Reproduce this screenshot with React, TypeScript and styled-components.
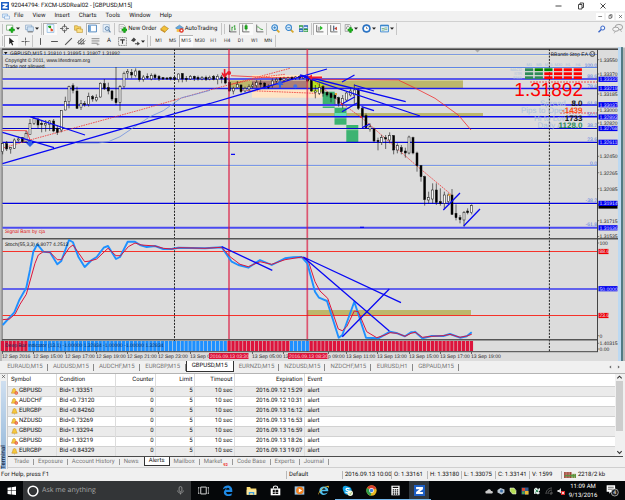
import React from "react";
import styled, { createGlobalStyle } from "styled-components";

const GlobalStyle = createGlobalStyle`
  * { box-sizing: border-box; }
  body { margin: 0; background: #f0f0f0; text-rendering: geometricPrecision; }
  button, input { font: inherit; color: inherit; text-rendering: inherit; }
`;

const UI = `Roboto, "Open Sans", sans-serif`;

const Desktop = styled.div`
  display: flex;
  flex-direction: column;
  min-height: 100vh;
  font-family: ${UI};
  font-size: 6px;
  line-height: 8px;
  color: #111;
  overflow: hidden;
`;

const PlainButton = styled.button`
  display: flex;
  align-items: center;
  justify-content: center;
  gap: 1px;
  padding: 0;
  margin: 0;
  border: 0;
  background: none;
  white-space: nowrap;
`;

/* ---------- title, menu ---------- */
const TitleBar = styled.header`
  display: flex;
  align-items: center;
  height: 11px;
  padding: 0 18px 0 1px;
  gap: 2px;
  background: #fff;
`;
const Title = styled.h1`
  flex: 1;
  margin: 0;
  font-size: 6px;
  font-weight: 400;
`;
const WindowButtons = styled.div<{ $gap: number }>`
  display: flex;
  gap: ${(p) => p.$gap}px;
`;
const MenuBar = styled.nav`
  display: flex;
  align-items: center;
  height: 11px;
  padding: 0 1px 0 2px;
  background: #f1f1f1;
  border-bottom: 1px solid #d0d0d0;
`;
const MenuItems = styled.div`
  flex: 1;
  display: flex;
  gap: 9px;
  padding-left: 4px;
`;
const ChildButton = styled(PlainButton)`
  width: 8px;
  height: 7px;
  background: #fff;
`;

/* ---------- toolbars ---------- */
const Toolbar = styled.div<{ $h: number }>`
  display: flex;
  align-items: center;
  height: ${(p) => p.$h}px;
  background: #f1f1f1;
`;
const Group = styled.div<{ $w: number }>`
  display: flex;
  align-items: stretch;
  width: ${(p) => p.$w}px;
  height: 12px;
  padding-left: 1px;
  border-right: 1px solid #c6c6c6;
`;
const Tool = styled(PlainButton)<{ $grow?: number; $on?: boolean }>`
  flex: ${(p) => p.$grow ?? 14} 1 0;
  min-width: 0;
  font-size: 6px;
  background: ${(p) => (p.$on ? "#fafafa" : "none")};
  box-shadow: ${(p) => (p.$on ? "inset 1px 1px 0 #b4b4b4" : "none")};
`;
const Period = styled(Tool)`
  font-size: 5px;
  color: #333;
`;
const Grip = styled.i`
  width: 2px;
  margin: 1px 0 1px 1px;
  border-left: 1px solid #c4c4c4;
`;
const ToolbarEnd = styled.div`
  display: flex;
  gap: 6px;
  margin-left: auto;
  padding-right: 2px;
`;

/* ---------- chart ---------- */
const ChartWindow = styled.main`
  background: #dcdcdc;
`;
const ChartSvg = styled.svg`
  display: block;
  width: 100%;
  height: auto;
`;
const TabStrip = styled.nav`
  display: flex;
  align-items: stretch;
  height: 13px;
  padding: 0 3px 1px 2px;
  background: #f0f0f0;
  border-bottom: 1px solid #b4b4b4;
`;
const TabSet = styled.div`
  display: flex;
  width: 457px;
`;
const ChartTab = styled(PlainButton)<{ $grow: number; $on?: boolean }>`
  flex: ${(p) => p.$grow} 1 0;
  font-size: 6px;
  color: ${(p) => (p.$on ? "#111" : "#777")};
  background: ${(p) => (p.$on ? "#fff" : "none")};
  border: solid #333;
  border-width: ${(p) => (p.$on ? "0 1px 1px 1px" : "0")};
  position: relative;
  &::after {
    content: "";
    position: absolute;
    right: 0;
    top: 3px;
    height: 7px;
    border-right: ${(p) => (p.$on ? "0" : "1px solid #888")};
  }
`;
const Scrollers = styled.div`
  display: flex;
  gap: 3px;
  margin-left: auto;
  color: #777;
`;

/* ---------- terminal ---------- */
const Terminal = styled.section`
  display: flex;
  height: 95px;
  background: #f0f0f0;
`;
const TerminalRail = styled.aside`
  width: 8px;
  display: flex;
  flex-direction: column;
  border-right: 1px solid #ccc;
`;
const RailTitle = styled.h2`
  flex: 1;
  margin: 2px 1px 0;
  writing-mode: vertical-rl;
  transform: rotate(180deg);
  font-size: 6px;
  line-height: 6px;
  font-weight: 600;
  color: #1c2f4c;
  background: linear-gradient(to top, #cfdff0, #8fb4d8);
`;
const TerminalBody = styled.div`
  flex: 1;
  display: flex;
  flex-direction: column;
  min-width: 0;
`;
const TableArea = styled.div`
  display: flex;
  height: 83px;
  margin-right: 2px;
  border-bottom: 1px solid #4a4a4a;
  background: #fff;
`;
const Table = styled.table`
  flex: 1;
  height: 82px;
  border-collapse: collapse;
  table-layout: fixed;
  font-size: 6px;
  line-height: 8px;
`;
const Cell = styled.td<{ $right?: boolean }>`
  padding: 0 1px 0 3px;
  text-align: ${(p) => (p.$right ? "right" : "left")};
  border-right: 1px solid #dcdcdc;
  white-space: nowrap;
  &:last-child { border-right: 0; }
`;
const HeadCell = styled(Cell).attrs({ as: "th", scope: "col" })`
  height: 12px;
  font-weight: 400;
`;
const Row = styled.tr<{ $shade: boolean }>`
  background: ${(p) => (p.$shade ? "#ebebeb" : "#fff")};
  border-top: 1px solid #d2d2d2;
`;
const SymbolName = styled.span`
  display: flex;
  align-items: center;
  gap: 1px;
`;
const ScrollBar = styled.div`
  width: 8px;
  display: flex;
  flex-direction: column;
  align-items: center;
  justify-content: space-between;
  background: #f0f0f0;
`;
const Thumb = styled.div`
  width: 7px;
  height: 50px;
  margin-bottom: auto;
  background: #cdcdcd;
`;
const TerminalTabs = styled.nav`
  display: flex;
  height: 11px;
  padding-left: 2px;
  border-bottom: 1px solid #cfcfcf;
`;
const TerminalTab = styled(PlainButton)<{ $on?: boolean; $bare?: boolean }>`
  height: ${(p) => (p.$on ? 9 : 10)}px;
  padding: ${(p) => (p.$on ? "0 4px" : "0 5px 0 4px")};
  font-size: 6px;
  color: ${(p) => (p.$on ? "#111" : "#777")};
  background: ${(p) => (p.$on ? "#fff" : `linear-gradient(#999, #999) right 0 top 2px / ${p.$bare ? 0 : 1}px 6px no-repeat`)};
  border: ${(p) => (p.$on ? "1px solid #333" : "0")};
  border-top: 0;
`;
const Unread = styled.sub`
  font-size: 4px;
  line-height: 4px;
  color: #e22;
  font-weight: 700;
  align-self: flex-end;
`;

/* ---------- status ---------- */
const StatusBar = styled.footer`
  display: grid;
  grid-template-columns: 1fr 56px 49px 36px 34px 34px 34px 32px 64px;
  align-items: center;
  height: 12px;
  background: #f0f0f0;
`;
const Status = styled.span`
  display: flex;
  align-items: center;
  gap: 2px;
  padding-left: 2px;
  white-space: nowrap;
  border-left: 1px solid #b8b8b8;
  &:first-child { border-left: 0; padding-left: 1px; }
`;

/* ---------- taskbar ---------- */
const Taskbar = styled.div`
  display: flex;
  align-items: stretch;
  flex: 1 0 19px;
  background: #050709;
  color: #fff;
`;
const StartButton = styled(PlainButton)`
  width: 23px;
`;
const SearchBox = styled.label`
  display: flex;
  align-items: center;
  gap: 3px;
  width: 168px;
  padding: 0 6px 0 4px;
  background: #333537;
`;
const SearchInput = styled.input`
  flex: 1;
  min-width: 0;
  padding: 0;
  border: 0;
  outline: 0;
  background: none;
  font-family: "Open Sans", sans-serif;
  font-size: 7px;
  &::placeholder { color: #a6a6a6; opacity: 1; }
`;
const TaskButton = styled(PlainButton)<{ $open?: boolean; $active?: boolean }>`
  width: 24px;
  padding: 0 2px;
  background: ${(p) => (p.$active ? "#30373d" : "none")};
  border-bottom: 1px solid ${(p) => (p.$open ? "#76b9ed" : "transparent")};
  background-clip: content-box;
`;
const Tray = styled.div`
  display: flex;
  align-items: center;
  margin-left: auto;
`;
const TrayButton = styled(PlainButton)`
  width: 12px;
`;
const Clock = styled.time`
  width: 32px;
  text-align: center;
  font-size: 6px;
  line-height: 9px;
  white-space: pre-line;
`;
const NoticeButton = styled(PlainButton)`
  width: 26px;
`;

/* ---------- icons ---------- */
type IconProps = { w?: number; h?: number; box?: string; children: React.ReactNode };
const Icon = ({ w = 9, h = 9, box = "0 0 16 16", children }: IconProps) => (
  <svg width={w} height={h} viewBox={box} fill="none" aria-hidden="true">
    {children}
  </svg>
);
const Caret = () => (
  <svg width="4" height="3" viewBox="0 0 4 3" aria-hidden="true"><path d="M0 .5h4L2 2.8z" fill="#222" /></svg>
);
const plus = "M10 6h3v3h3v3h-3v3h-3v-3H7V9h3z";

const icons = {
  logo: <><rect width="16" height="16" fill="#1d5fc4" /><path d="M3 3h10v3l-5 4h5v3H3v-3l5-4H3z" fill="#fff" /></>,
  child: <><path d="M1 4h10v7H1z" fill="#dcebfa" stroke="#6b9bd0" /><path d="M5 8h10v6H5z" fill="#eef6ff" stroke="#6b9bd0" /></>,
  addChart: <><path d="M1 2h11v9H1z" fill="#fff" stroke="#4a8a4a" /><path d={plus} fill="#18b818" stroke="#0b8a0b" transform="translate(-1 0)" /></>,
  profile: <><path d="M1 2h11v8H1z" fill="#e8f1fa" stroke="#6f93b8" /><path d="M4 5h11v8H4z" fill="#cfe2f4" stroke="#6f93b8" /><path d="M5 14h9" stroke="#777" strokeWidth="2" /></>,
  market: <><path d="M2 1h12v14H2z" fill="#f4faff" stroke="#67a0d4" /><path d="M4 4l3 3M5 4h3v3" stroke="#17a017" strokeWidth="2" /><path d="M12 12L8 8M11 9v3H8" stroke="#e04a20" strokeWidth="2" /></>,
  target: <><circle cx="8" cy="8" r="4.5" stroke="#555" strokeWidth="1.5" /><path d="M8 0v6M8 10v6M0 8h6M10 8h6" stroke="#555" strokeWidth="1.5" /></>,
  folderStar: <><path d="M1 3h5l1 2h5v6H1z" fill="#f6d264" stroke="#b98c1e" /><path d="M5 8h4l1 1h5v6H5z" fill="#fbe08a" stroke="#b98c1e" /></>,
  terminal: <><path d="M1 2h14v12H1z" fill="#fff" stroke="#3a78b8" strokeWidth="1.5" /><path d="M2 3h3v10H2z" fill="#5a9ad6" /></>,
  tester: <><path d="M2 1h11v13H2z" fill="#e9f2fb" stroke="#8fa9c4" /><circle cx="9" cy="8" r="3.5" fill="#cfe3f5" stroke="#5a7fa6" strokeWidth="1.5" /><path d="M12 11l3 4" stroke="#5a7fa6" strokeWidth="2" /></>,
  order: <><path d="M2 1h8l3 3v10H2z" fill="#f7f7f7" stroke="#888" /><path d="M4 5h6M4 8h4" stroke="#999" /><path d={plus} fill="#18b818" stroke="#0b8a0b" /></>,
  book: <><path d="M1 9l6-6 8 5-6 6z" fill="#f2c03a" stroke="#a8740e" /><path d="M1 9l8 5v2L1 11z" fill="#c98a18" /></>,
  auto: <><path d="M1 7l7-5 7 5-7 4z" fill="#67a9dc" stroke="#3e78aa" /><path d="M3 9h9v5H3z" fill="#f3c14a" /><circle cx="11.500" cy="11.500" r="4" fill="#e02a1c" /><path d="M10 10h3v3h-3z" fill="#fff" /></>,
  bars: <><path d="M3 1v13h12M2 13h2" stroke="#555" strokeWidth="1.5" /><path d="M7 5v7M12 2v9M7 6h2M10 4h2M12 9h2" stroke="#2a9a2a" strokeWidth="1.5" /></>,
  candle: <><path d="M3 1v13h12" stroke="#555" strokeWidth="1.5" /><path d="M9 0v12" stroke="#0a7a0a" /><path d="M7 3h4v6H7z" fill="#20b820" stroke="#0a7a0a" /></>,
  line: <><path d="M3 1v13h12" stroke="#555" strokeWidth="1.5" /><path d="M4 5c4 0 4 5 10 5" stroke="#2a9a2a" strokeWidth="1.5" /></>,
  zoomIn: <><path d="M9 9l6 6" stroke="#d8a728" strokeWidth="3" /><circle cx="6.500" cy="6.500" r="5" fill="#d8ecfb" stroke="#2f7fc9" strokeWidth="1.8" /><path d="M4 6.500h5M6.500 4v5" stroke="#2f7fc9" strokeWidth="1.5" /></>,
  zoomOut: <><path d="M9 9l6 6" stroke="#d8a728" strokeWidth="3" /><circle cx="6.500" cy="6.500" r="5" fill="#d8ecfb" stroke="#2f7fc9" strokeWidth="1.8" /><path d="M4 6.500h5" stroke="#2f7fc9" strokeWidth="1.500" /></>,
  tile: <><path d="M0 2h7v6H0zM8 8h8v6H8z" fill="#2e9c3e" /><path d="M8 2h8v6H8zM0 8h7v6H0z" fill="#2c66bb" /><path d="M1 5h5v2H1zM9 5h6v2H9zM1 11h5v2H1zM9 11h6v2H9z" fill="#e6f2ff" /></>,
  scroll: <><path d="M3 2v12h12M7 5v7" stroke="#555" strokeWidth="1.5" /><path d="M9 3l5 4-5 4z" fill="#20b820" /></>,
  shift: <><path d="M3 2v12h12M8 3v9" stroke="#555" strokeWidth="1.5" /><path d="M14 5L9 8l5 3z" fill="#c0392b" /><path d="M9 3v9" stroke="#2f6fb5" /></>,
  indicator: <><path d="M2 1h8l2 2v10H2z" fill="#eee" stroke="#777" /><path d="M4 9c1-6 3-6 5-4" stroke="#555" /><path d={plus} fill="#18b818" stroke="#0b8a0b" /></>,
  clock: <><circle cx="8" cy="8" r="7" fill="#2f7fd6" stroke="#1d5a9f" /><circle cx="8" cy="8" r="4.500" fill="#fff" /><path d="M8 5v3h2" stroke="#333" /></>,
  template: <><path d="M1 2h14v12H1z" fill="#e8f4ff" stroke="#2f7fc9" strokeWidth="1.5" /><path d="M1 3h14" stroke="#2f7fc9" strokeWidth="2" /><path d="M3 8h4l2-1h4M3 11h3l3-1h4" stroke="#3a8a3a" /></>,
  find: <><circle cx="9.500" cy="6" r="4" fill="#eef5ff" stroke="#3a66c8" strokeWidth="2" /><path d="M6.500 9L1 14.500" stroke="#3a66c8" strokeWidth="3" /></>,
  chat: <><ellipse cx="10" cy="6" rx="5.500" ry="4" fill="#eee" stroke="#999" strokeWidth="1.3" /><ellipse cx="5.500" cy="9" rx="4.500" ry="3" fill="#f6f6f6" stroke="#999" strokeWidth="1.3" /><path d="M5 12l-2 3M12 10l2 3" stroke="#999" /></>,
  cursor: <path d="M4 1v12l3-3 2 5 2-1-2-5h4z" fill="#222" />,
  cross: <path d="M8 1v14M1 8h14" stroke="#555" strokeWidth="1.5" strokeDasharray="5 1" />,
  vline: <path d="M8 2v12" stroke="#555" strokeWidth="1.8" />,
  hline: <path d="M2 8h12" stroke="#555" strokeWidth="1.8" />,
  trend: <path d="M2 14L14 2" stroke="#555" strokeWidth="1.8" />,
  channel: <path d="M0 11L9 2M3 13L13 3M7 14l8-8M3 6v6M7 3v9M11 4v9M2 12h12" stroke="#555" strokeWidth="1.3" />,
  fibo: <><path d="M1 3h14M1 7h14M1 11h10" stroke="#777" strokeWidth="1.5" /><path d="M12 10v5M10 13h5" stroke="#777" /></>,
  label: <><path d="M1 1h14v14H1z" stroke="#777" strokeDasharray="2 1" strokeWidth="1.5" /><path d="M4 5h8M8 5v7" stroke="#333" strokeWidth="2" /></>,
  arrows: <path d="M0 6l5-5 4 4-4 4zM7 11h4V8l5 4-5 3v-2H7z" fill="#444" />,
  bell: <><path d="M8 1c3 0 4 3 4 6l2 4v1H2v-1l2-4c0-3 1-6 4-6z" fill="#f6c83c" stroke="#b9851a" /><path d="M6 13h4l-2 2z" fill="#b9851a" /></>,
  bellOff: <><path d="M7 1c3 0 4 3 4 6l2 4v1H1v-1l2-4c0-3 1-6 4-6z" fill="#f6c83c" stroke="#b9851a" /><circle cx="12" cy="11.500" r="4" fill="#e4502e" /><path d="M10 11.500h4" stroke="#fff" strokeWidth="1.5" /></>,
  min: <path d="M1 8h12" stroke="#333" strokeWidth="1.8" />,
  restore: <><path d="M3 5h7v9H3z" stroke="#333" strokeWidth="1.8" /><path d="M6 5V2h7v9h-3" stroke="#333" strokeWidth="1.8" /></>,
  close: <path d="M3 3l10 10M13 3L3 13" stroke="#333" strokeWidth="1.8" />,
  left: <path d="M11 4L6 8l5 4z" fill="#666" />,
  right: <path d="M5 4l5 4-5 4z" fill="#666" />,
  up: <path d="M3 10l5-5 5 5" stroke="#333" strokeWidth="2.500" />,
  down: <path d="M3 5l5 5 5-5" stroke="#333" strokeWidth="2.500" />,
  win: <path d="M1 3l6-1v6H1zM8 2l8-1v7H8zM1 9h6v6l-6-1zM8 9h8v7l-8-1z" fill="#fff" />,
  cortana: <circle cx="8" cy="8" r="6.500" stroke="#fff" strokeWidth="2" />,
  mic: <><rect x="5.500" y="1" width="5" height="9" rx="2.500" stroke="#aaa" strokeWidth="1.3" /><path d="M3 8c0 6 10 6 10 0M8 12v3" stroke="#aaa" strokeWidth="1.3" /></>,
  taskview: <path d="M4 3h8v10H4zM2 4H0v8h2M14 4h2v8h-2" stroke="#ddd" strokeWidth="1.4" />,
  edge: <path d="M1 7c1-8 14-9 14 1v2H6c0 4 5 4 8 2v3C8 18 1 15 3 9c1-2 3-4 5-4-5-1-7 2-7 2zm5 0h5c0-4-5-4-5 0z" fill="#1e8ae6" />,
  folder: <><path d="M1 3h5l1 2h8v9H1z" fill="#fbdc74" /><path d="M1 7h14v7H1z" fill="#fce9a0" /><path d="M4 10h8v4h-2v-2H6v2H4z" fill="#3f9fe0" /></>,
  store: <><path d="M1 5h14v10H1z" fill="#fff" /><path d="M5 5V3c0-2 6-2 6 0v2" stroke="#fff" strokeWidth="1.500" /><path d="M4 7h3v3H4zM8 7h4v3H8zM4 11h3v2H4zM8 11h4v2H8z" fill="#111" /></>,
  media: <><rect x="1" y="2" width="14" height="12" fill="#9cc4e4" /><circle cx="8.500" cy="8" r="5.500" fill="#f08020" /><path d="M7 5l5 3-5 3z" fill="#fff" /></>,
  ie: <><path d="M2 8c0-8 13-8 13 0v1H6c0 4 4 4 8 2-2 5-12 5-12-3zm4-1h5c0-3-5-3-5 0z" fill="#4fc0f0" /><path d="M1 15C-2 11 9 1 15 1c2 1 0 3 0 4 0-4-5-3-9 1s-6 8-5 9z" fill="#f2c230" /></>,
  skype: <><circle cx="5" cy="5" r="4" fill="#12a5e8" /><circle cx="8" cy="8" r="6" fill="#12a5e8" /><path d="M11 6C9 4 5 5 6 7s5 1 5 3-4 2-6 0" stroke="#fff" strokeWidth="1.700" /><circle cx="12" cy="12" r="4" fill="#f4f9e8" /><path d="M10 12l2 2 2-4" stroke="#7aa82c" /></>,
  chrome: <><circle cx="8" cy="8" r="7.500" fill="#e8b824" /><path d="M8 8L1.500 4.200A7.500 7.500 0 0 1 15 5z" fill="#d8402f" /><path d="M8 8L1.500 4.200A7.500 7.500 0 0 0 7 15.500z" fill="#2fa04c" /><circle cx="8" cy="8" r="3.500" fill="#fff" /><circle cx="8" cy="8" r="2.600" fill="#3f7fe0" /></>,
  calc: <><path d="M2 1h12v14H2z" fill="#fff" /><path d="M4 2.500h8v2H4zM4 6h2v2H4zM7 6h2v2H7zM10 6h2v2h-2zM4 9h2v2H4zM7 9h2v2H7zM10 9h2v2h-2zM4 12h2v2H4zM7 12h2v2H7zM10 12h2v2h-2z" fill="#111" /></>,
  cloud: <path d="M1 12c-1-4 2-5 3-4 1-5 8-5 8 0 4-1 5 4 2 5H2z" fill="#c9c9c9" />,
  camera: <><path d="M1 6l6-4 8 3v6l-6 4-8-4z" fill="#b8c4cf" /><circle cx="9" cy="8" r="3" fill="#3c6fa8" /></>,
  leaf: <path d="M2 2h8l4 5v7H7L2 8z" fill="#b5dd55" stroke="#fff" />,
  photo: <><path d="M1 1h14v14H1z" fill="#35598c" /><path d="M2 2h6v6H2z" fill="#db4a32" /><path d="M8 8h7v7H8z" fill="#eab830" /><path d="M2 9h5v5H2z" fill="#4ea650" /></>,
  dropbox: <><path d="M2 4l4-3 4 3 4-2v5l-3 2 3 3-4 3-4-2-4 1V8z" fill="#dfe9e4" /><path d="M5 5l5 5M10 5l-5 6" stroke="#2c8a58" strokeWidth="2" /></>,
  wifi: <path d="M2 14C2 7 7 2 14 2M6 14c0-5 3-8 8-8M10 14c0-2 2-4 4-4v4z" stroke="#777" strokeWidth="1.5" />,
  sound: <><path d="M1 6h3l4-4v11L4 10H1z" fill="#ddd" /><rect x="8" y="8" width="8" height="8" fill="#e02a2a" /><path d="M10 10l4 4M14 10l-4 4" stroke="#fff" strokeWidth="1.500" /></>,
  traffic: <><path d="M0 0h20v16H0z" fill="#9c3c30" /><path d="M20 5h12v11H20z" fill="#6d8f3e" /><path d="M3 0v16M7 0v16M11 0v16M15 0v16M23 4v12M28 6v10" stroke="#f0e6e0" strokeWidth="1" /><path d="M2 10h30" stroke="#4b9a3c" strokeWidth="3" /></>,
};
type IconName = keyof typeof icons;
const Glyph = ({ name, size = 9 }: { name: IconName; size?: number }) => (
  <Icon w={size} h={size}>{icons[name]}</Icon>
);

/* ---------- chart data ---------- */
type Pt = [number, number];
const STEP = 3.908;
const xOf = (i: number) => 2.7 + STEP * i;
/** Joins points measured in thirds of a pixel from an origin. */
const trace = (ox: number, oy: number, pts: Pt[]) =>
  pts.map(([x, y]) => `${(ox + x / 3).toFixed(1)},${(oy + y / 3).toFixed(1)}`).join(" ");

/** high, low, body top, body bottom, bearish */
const candles: [number, number, number, number, number][] = [
  [293, 328, 296, 320, 0], [288, 318, 296, 312, 1], [306, 326, 308, 312, 0], [280, 312, 285, 310, 0],
  [275, 290, 282, 285, 0], [276, 292, 278, 290, 1], [258, 292, 266, 290, 0], [222, 268, 236, 268, 0],
  [215, 240, 220, 235, 0], [220, 250, 222, 240, 1], [225, 262, 235, 239, 1], [225, 260, 236, 240, 0],
  [225, 258, 228, 238, 0], [222, 262, 228, 258, 1], [240, 270, 250, 262, 1], [195, 262, 196, 255, 0],
  [155, 196, 170, 195, 0], [122, 190, 124, 170, 0], [115, 145, 122, 136, 1], [125, 192, 138, 190, 1],
  [165, 195, 175, 188, 0], [168, 185, 176, 179, 1], [143, 185, 155, 178, 0], [150, 170, 155, 162, 1],
  [148, 170, 158, 165, 0], [112, 158, 115, 156, 0], [102, 135, 116, 130, 1], [113, 148, 128, 138, 1],
  [135, 168, 138, 162, 1], [66, 180, 160, 173, 1], [120, 197, 125, 172, 0], [80, 130, 85, 125, 0],
  [72, 100, 80, 84, 0], [72, 100, 82, 90, 1], [70, 97, 78, 92, 0], [76, 110, 78, 104, 1],
  [90, 110, 96, 103, 0], [85, 102, 94, 98, 1], [85, 106, 92, 102, 0], [86, 104, 90, 98, 1],
  [90, 108, 94, 102, 1], [96, 105, 98, 102, 1], [96, 105, 99, 102, 1], [95, 106, 98, 102, 1],
  [96, 105, 98, 103, 1], [85, 112, 87, 104, 0], [84, 112, 86, 102, 1], [93, 110, 100, 104, 1],
  [90, 105, 94, 102, 0], [92, 108, 94, 101, 1], [92, 107, 97, 102, 1], [93, 106, 97, 102, 0],
  [92, 108, 97, 103, 1], [92, 106, 97, 102, 0], [90, 106, 94, 103, 1], [88, 118, 94, 104, 0],
  [90, 115, 96, 101, 1], [85, 118, 96, 114, 1], [105, 140, 112, 138, 1], [125, 148, 130, 138, 0],
  [108, 130, 118, 128, 0], [118, 145, 120, 140, 1], [125, 142, 130, 138, 0], [118, 140, 124, 132, 0],
  [112, 130, 120, 124, 0], [105, 128, 112, 122, 0], [105, 128, 114, 118, 1], [112, 130, 114, 126, 1],
  [118, 132, 124, 128, 1], [100, 128, 108, 122, 0], [98, 115, 103, 108, 0], [96, 110, 100, 105, 1],
  [95, 112, 100, 106, 0], [95, 107, 99, 103, 0], [94, 106, 98, 102, 1], [93, 105, 96, 100, 0],
  [91, 104, 95, 99, 1], [90, 102, 94, 100, 0], [90, 112, 96, 108, 1], [100, 140, 106, 138, 1],
  [120, 160, 138, 142, 0], [115, 150, 128, 145, 0], [120, 155, 125, 145, 1], [140, 155, 142, 150, 1],
  [142, 172, 145, 158, 1], [145, 178, 150, 160, 1], [155, 185, 158, 176, 1], [150, 190, 160, 178, 0],
  [138, 170, 144, 165, 0], [128, 155, 138, 150, 0], [118, 178, 135, 150, 0], [130, 195, 136, 190, 1],
  [185, 245, 190, 214, 1], [205, 250, 212, 248, 1], [235, 260, 245, 252, 0], [248, 292, 252, 288, 1],
  [278, 316, 286, 290, 1], [270, 300, 278, 292, 0], [270, 312, 278, 282, 1], [262, 295, 272, 285, 0],
  [270, 328, 272, 315, 1], [295, 325, 302, 315, 0], [300, 328, 308, 320, 1], [308, 338, 318, 324, 1],
  [272, 328, 276, 324, 0], [275, 328, 278, 324, 1], [320, 380, 324, 362, 1], [360, 410, 362, 395, 1],
  [392, 482, 395, 464, 1], [440, 475, 458, 465, 0], [415, 475, 435, 462, 0], [415, 480, 435, 472, 1],
  [430, 482, 470, 476, 1], [440, 490, 450, 475, 0], [445, 475, 450, 470, 0], [432, 510, 450, 508, 1],
  [478, 526, 505, 518, 1], [510, 535, 518, 524, 1], [498, 545, 502, 525, 0], [490, 508, 498, 503, 1],
  [478, 508, 482, 503, 0],
];

/** y, colour, thickness */
const levels: [number, string, number][] = [
  [54.5, "#7f9be0", 1], [67.5, "#5f86e6", 1], [79, "#2c2cf0", 1.5], [88.5, "#1c1cf0", 1.3],
  [105, "#4040f0", 2], [116.7, "#0808f0", 1.6], [128.5, "#0000cc", 1.1], [142.4, "#0000d8", 1.4],
  [165.4, "#6f90e8", 1], [203.4, "#0000e0", 1.2], [227.8, "#4a4af0", 2],
];
const trends: [number, number, number, number][] = [
  [2.5, 163.7, 210, 103.3], [205, 105, 327, 69], [30, 116.7, 85, 135], [2.5, 132.3, 54, 147.7],
  [300, 75, 405.7, 101.7], [300, 75.7, 420, 116], [354, 85, 374, 91], [342, 82, 354.5, 75],
  [342, 111.7, 357, 103], [342, 104, 355, 96.700], [361.5, 106.7, 374, 110.7], [362, 127.7, 370, 124],
  [443.3, 210, 460, 193], [463.7, 226, 480, 209], [231, 154.4, 235, 154.4], [360, 227.3, 364, 227.3],
];
const axis: [number, string][] = [
  [59.7, "1.33550"], [74, "1.33370"], [94, "1.33185"], [110, "1.33000"], [123, "1.32820"], [156.3, "1.32450"],
  [172.7, "1.32265"], [188.7, "1.32085"], [220.7, "1.31715"], [236.500, "1.31535"], [243, "100"],
  [335.7, "0"], [343.300, "1.40315"], [349, "0.00"],
];
const tags: [number, string, string, number][] = [
  [206, "", "#000", 19], [79.300, "1.33332", "#0000f0", 19], [88.6, "1.33219", "#0000f0", 19],
  [104.700, "1.33037", "#0000f0", 19], [117, "1.32893", "#0000f0", 19], [128.5, "1.32768", "#0000f0", 19],
  [142.3, "1.32611", "#0000f0", 19], [203.4, "1.31914", "#0000f0", 19], [227.8, "1.31636", "#0000f0", 19],
  [251.5, "88.6", "#f00000", 10], [288.700, "50.0000", "#0000f0", 19], [315.500, "23.6", "#f00000", 10],
];
const fibs: [number, string][] = [
  [65, "100.0"], [76, "88.6"], [86, "78.6"], [103, "61.8"], [114.3, "50.0"], [125.5, "38.2"],
  [139.7, "23.6"], [163, "0.0"], [200.500, "-38.2"], [224.300, "-61.8"],
];
const dates: [number, string][] = [
  [2, "12 Sep 2016"], [33, "12 Sep 15:00"], [65, "12 Sep 17:00"], [96, "12 Sep 19:00"], [127, "12 Sep 21:00"],
  [158, "12 Sep 23:00"], [190, "13 Sep 0"], [252, "13 Sep 05:00"], [283, "13"], [328, "p 09:00"],
  [346, "13 Sep 11:00"], [377, "13 Sep 13:00"], [409, "13 Sep 15:00"], [440, "13 Sep 17:00"], [471, "13 Sep 19:00"],
];
const G = "#2e8b57", D = "#008000", R = "#ff0000";
const signals = [[G, D, D, R, R, R], [G, G, R, R, R, R], [G, G, R, R, R, R]];
const signalX = [525, 534.7, 544.3, 554, 563.7, 573.7];

const fast = [
  trace(0, 235, [[8, 270], [43, 232], [58, 195], [79, 158], [90, 105], [100, 50], [112, 28], [130, 50], [150, 52], [172, 88], [184, 78], [207, 15], [219, 22], [235, 65], [254, 96], [275, 75], [290, 66], [311, 38], [324, 33], [348, 72], [360, 66], [383, 20], [405, 20], [420, 30], [440, 36], [465, 33], [490, 42], [515, 42], [535, 38], [615, 40]]),
  trace(205, 235, [[0, 40], [25, 38], [50, 37], [80, 80], [100, 90], [130, 98], [165, 75], [200, 90], [240, 70], [265, 67], [290, 66], [307, 85], [330, 170], [342, 188], [366, 198], [401, 308], [412, 300], [448, 200], [483, 308], [520, 310], [555, 290], [577, 295], [600, 304], [618, 292], [630, 292]]),
  trace(415, 235, [[0, 290], [22, 310], [50, 303], [85, 303], [105, 297], [135, 308], [155, 304], [170, 292]]),
].join(" ");
const slow = [
  trace(0, 235, [[8, 254], [28, 252], [45, 238], [60, 208], [79, 178], [105, 85], [115, 60], [130, 50], [150, 52], [172, 74], [184, 74], [208, 38], [219, 30], [254, 80], [270, 78], [290, 72], [324, 40], [348, 62], [362, 62], [385, 35], [405, 24], [425, 30], [465, 33], [490, 40], [515, 42], [540, 38], [615, 40]]),
  trace(205, 235, [[0, 40], [50, 37], [75, 65], [105, 88], [130, 95], [165, 80], [200, 88], [240, 74], [290, 66], [310, 78], [330, 140], [345, 168], [368, 190], [400, 282], [412, 287], [425, 275], [448, 228], [460, 230], [485, 290], [515, 308], [540, 300], [555, 293], [577, 295], [600, 304], [618, 295], [630, 292]]),
  trace(415, 235, [[0, 291], [22, 307], [50, 304], [85, 302], [105, 298], [135, 307], [155, 303], [170, 298]]),
].join(" ");

const isBull = (i: number) => (i >= 7 && i < 58) || (i >= 74 && i < 79);
const ARIAL = `"Liberation Sans", Arial, sans-serif`;

function Chart() {
  return (
    <ChartSvg viewBox="0 47 625 314" role="img" aria-label="GBPUSD M15 price chart" fontFamily={ARIAL} fontSize="5">
      <rect y="47" width="625" height="314" fill="#b8b8b8" />
      <rect x="2" y="49" width="616" height="312" fill="#dcdcdc" />
      <path d="M0 47.500h625" stroke="#d8d8d8" />
      <path d="M2 49.200h616" stroke="#444" strokeWidth="1.400" />
      <path d="M2.200 49v303" stroke="#555" strokeWidth=".8" />
      <path d="M619.500 47v314" stroke="#bcd9f2" strokeWidth="3" />
      <path d="M622 47v314" stroke="#27606e" strokeWidth="1.400" />

      <g>
        <rect x="252" y="75" width="70" height="22.700" fill="#ffe4c4" />
        <rect x="229" y="80" width="234" height="8.700" fill="#bdb76b" />
        <rect x="252" y="80" width="55" height="8.700" fill="#ab7f76" />
        <rect x="311" y="80" width="12" height="11.700" fill="#b4e61e" />
        <rect x="307" y="113" width="176" height="3.400" fill="#bdb76b" />
        <rect x="322.700" y="91.700" width="12" height="16.300" fill="#3cb371" />
        <rect x="334.500" y="107.700" width="12" height="17" fill="#3cb371" />
        <rect x="334.500" y="113" width="12" height="3.400" fill="#66ddb8" />
        <rect x="346.300" y="125" width="12" height="17" fill="#3cb371" />
        <rect x="307" y="310" width="164" height="5.300" fill="#bdb76b" />
      </g>

      {levels.map(([y, c, w]) => (
        <g key={y}>
          <path d={`M2.500 ${y + 1.2}H597`} stroke="#f4f0c8" strokeWidth=".6" />
          <path d={`M2.500 ${y}H597`} stroke={c} strokeWidth={w} />
        </g>
      ))}
      <path d="M2.500 251.500H597M2.500 315.500H597" stroke="#f5322a" strokeWidth="1" />
      <path d="M2.500 289H597" stroke="#3a3af0" strokeWidth="1.600" />
      <path d="M174.500 49v303M549.400 49v303" stroke="#222" strokeWidth="1" strokeDasharray="2 1.300" />

      <g fill="none" stroke="#f03030" strokeWidth=".8">
        <polyline points={trace(0, 45, [[8, 256], [80, 257], [90, 285]])} />
        <polyline points={trace(0, 45, [[12, 308], [90, 285], [200, 255], [420, 195], [615, 139], [870, 70]])} strokeDasharray="1.600 .9" />
        <polyline points={trace(205, 45, [[78, 92], [200, 98], [300, 97]])} />
        <polyline points={trace(205, 45, [[80, 118], [180, 95], [240, 88]])} strokeDasharray="1.600 .9" />
        <polyline points={trace(205, 45, [[110, 136], [330, 145]])} strokeDasharray="1.600 .9" />
        <polyline points={trace(205, 45, [[318, 100], [410, 175], [470, 218], [630, 358], [740, 450]])} strokeDasharray="1.600 .9" />
        <polyline points={trace(205, 45, [[350, 103], [580, 105], [630, 129], [690, 160], [760, 210], [798, 255]])} />
        <path d="M530 82H597M560 113h37" strokeDasharray="2 1" />
      </g>
      <polyline fill="none" stroke="#6f90e0" strokeWidth=".8" points={trace(0, 45, [[230, 294], [295, 294], [325, 290], [360, 275], [400, 248], [450, 215], [490, 197], [545, 158], [575, 151], [630, 136]])} />

      {candles.map(([h, l, t, b, bear], i) => {
        const x = Math.round(xOf(i) * 3) / 3;
        return (
          <g key={i}>
            <path d={`M${x} ${45 + h / 3}V${45 + l / 3}`} stroke="#111" strokeWidth=".6" />
            <rect x={x - 1} y={45 + t / 3} width="2" height={Math.max(0.8, (b - t) / 3)} fill={bear ? "#000" : "#f8f8f8"} stroke="#111" strokeWidth=".5" />
          </g>
        );
      })}

      <path d="M229 49v303M307.300 49v303" stroke="#dc143c" strokeOpacity=".68" strokeWidth="1.700" />
      <path d={trends.map(([a, b, c, d]) => `M${a} ${b}L${c} ${d}`).join("")} stroke="#0808f4" strokeWidth="1.300" fill="none" />
      <g fill="#ef1c2c">
        <circle cx="229" cy="73" r="2.100" />
        <path d="M223.800 69h1.600v5l2-2v2.600l-2.800 3.600-2.800-3.600V72l2 2z" />
        <path d="M308 77l4-2.500V76.500h10v2h-10v1.500z" />
        <circle cx="341.700" cy="104" r="1" /><circle cx="361" cy="117" r="1" />
      </g>
      <path d="M335 93h2v2h-2zM448.500 194h2v2h-2z" fill="#e8a030" />
      <path d="M28 141h4v2h2l-4 4-4-4h2zM279 88v-3h-2.500l3.500-5 3.500 5h-2.500v3z" fill="#2f5fe8" />
      <circle cx="295.300" cy="86.300" r="2" fill="#4a6fe0" />

      <path d="M2 238.800h616M2 339.800h596" stroke="#555" strokeWidth="1.600" />
      <polyline points={fast} fill="none" stroke="#1e90ff" strokeWidth="1.900" strokeLinejoin="round" />
      <polyline points={slow} fill="none" stroke="#dc143c" strokeWidth="1" />
      <path d="M221.700 246.700L272.300 270.300M303.300 257L401 302.700M303.300 257L389.300 331M342.300 336.700L389.300 289" stroke="#0808f4" strokeWidth="1.300" />

      {candles.map((_, i) => (
        <rect key={i} x={xOf(i) - 1.9} y="341" width="3.300" height="10" fill={isBull(i) ? "#1e90ff" : "#dc143c"} />
      ))}
      <path d="M2 351.700h596M597.500 49v303" stroke="#444" strokeWidth="1" />

      <g fill="#111">
        <path d="M4 52h3.500L5.700 54.500z" />
        <text x="10" y="55">GBPUSD,M15  1.31810 1.31895 1.31807 1.31892</text>
        <text x="5" y="61.500">Copyright © 2011, www.lifesdream.org</text>
        <text x="5" y="67.500">Trade not allowed.</text>
        <text x="5" y="246">Stoch(55,3,3) 6.8077 4.2513</text>
        <text x="588" y="55.500" textAnchor="end">BBands Stop EA</text>
        <circle cx="592.300" cy="54" r="2.500" fill="none" stroke="#222" strokeWidth=".7" />
        <path d="M591 53.500h.8M593 53.500h.8M591 55.500q1.300-1 2.600 0" stroke="#222" strokeWidth=".5" fill="none" />
      </g>
      <text x="5" y="346.500" fill="#0a2a5c">Deep Bar Indicator (13.1) -1.00000 1.32834 -1.00000 -1.00000 1.32834</text>
      <text x="5" y="232.500" fill="#e01818">Signal Bars by cja</text>
      <path d="M475 50h5l-2.500 2.500z" fill="#aaa" />

      <g fill="#a9bfdc">
        {["M1", "M5", "M15", "M30", "H1", "H4"].map((t, i) => (
          <text key={t} x={signalX[i] + 4.3} y="66" textAnchor="middle" fontSize="4">{t}</text>
        ))}
        {["MACD", "STR", "EMA"].map((t, i) => (
          <text key={t} x="522" y={71 + i * 4} textAnchor="end" fontSize="4">{t}</text>
        ))}
        <g fontSize="8">
          <text x="540" y="105.500">Spread</text>
          <text x="521" y="113">Pips to Open</text>
          <text x="534" y="120.500">Hi to Low</text>
          <text x="537.500" y="128">Daily Av</text>
        </g>
      </g>
      {signals.map((row, r) => row.map((c, i) => (
        <rect key={`${r}${i}`} x={signalX[i]} y={68.3 + r * 4} width="8.200" height="2.800" fill={c} />
      )))}
      <text x="583" y="96" textAnchor="end" fontSize="19" fill="#f00">1.31892</text>
      <g fontSize="8" fontWeight="700" textAnchor="end">
        <text x="582.500" y="105.500" fill="#111">8.0</text>
        <text x="582.500" y="113" fill="#ff4a10">-1439</text>
        <text x="582.500" y="120.500" fill="#111">1733</text>
        <text x="582.500" y="128" fill="#2e8b57">1128.0</text>
      </g>
      <g fill="#4f74e0" textAnchor="end">
        {fibs.map(([y, t]) => <text key={t} x="597" y={y + 1.7}>{t}</text>)}
      </g>
      <g fill="#222">
        {axis.map(([y, t]) => (
          <g key={t}><path d={`M598 ${y}h1.200`} stroke="#444" strokeWidth=".6" /><text x="599.500" y={y + 1.8}>{t}</text></g>
        ))}
      </g>
      {tags.map(([y, t, c, w]) => (
        <g key={y}><rect x="598.500" y={y - 2.6} width={w} height="5.200" fill={c} />{t && <text x="599.500" y={y + 1.8} fill="#e4e4ff">{t}</text>}</g>
      ))}
      <g fill="#222">
        {dates.map(([x, t]) => (
          <g key={t}><path d={`M${x + 0.5} 352v2`} stroke="#333" strokeWidth=".7" /><text x={x} y="358">{t}</text></g>
        ))}
      </g>
      {[[209, "2016.09.13 03:30"], [288, "2016.09.13 08:30"]].map(([x, t]) => (
        <g key={t}><rect x={x} y="353" width="39.500" height="6" fill="#dc143c" /><text x={Number(x) + 1} y="358" fill="#ffd8d8">{t}</text></g>
      ))}
    </ChartSvg>
  );
}

/* ---------- page data ---------- */
const menus = ["File", "View", "Insert", "Charts", "Tools", "Window", "Help"];
const periods = ["M1", "M5", "M15", "M30", "H1", "H4", "D1", "W1", "MN"];
const chartTabs = ["EURAUD,M15", "AUDUSD,M15", "AUDCHF,M15", "EURGBP,M15", "GBPUSD,M15", "EURNZD,M15", "NZDUSD,M15", "NZDCHF,M15", "EURUSD,H1", "GBPAUD,M15"];
const termTabs = ["Trade", "Exposure", "Account History", "News", "Alerts", "Mailbox", "Market", "Code Base", "Experts", "Journal"];
const columns: [string, number | undefined][] = [["Symbol", 48], ["Condition", 59], ["Counter", 40], ["Limit", 39], ["Timeout", 40], ["Expiration", 70], ["Event", undefined]];
const alerts: [boolean, string, string, string][] = [
  [false, "GBPUSD", "Bid>1.33351", "2016.09.12 15:29"],
  [false, "AUDCHF", "Bid <0.73120", "2016.09.12 10:31"],
  [true, "EURGBP", "Bid <0.84260", "2016.09.13 16:12"],
  [false, "NZDUSD", "Bid>0.73269", "2016.09.13 16:53"],
  [true, "GBPUSD", "Bid>1.33294", "2016.09.13 16:59"],
  [false, "GBPUSD", "Bid>1.33219", "2016.09.13 18:26"],
  [true, "EURGBP", "Bid <0.84329", "2016.09.13 19:07"],
];
const tools = (names: IconName[], on: IconName[] = []) =>
  names.map((n) => <Tool key={n} $on={on.includes(n)} aria-label={n}><Glyph name={n} /></Tool>);
const drop = (n: IconName) => (
  <Tool key={n} $grow={18} aria-label={n}><Glyph name={n} /><Caret /></Tool>
);

export default function App() {
  return (
    <Desktop>
      <GlobalStyle />
      <TitleBar>
        <Glyph name="logo" size={8} />
        <Title>92044794: FXCM-USDReal02 - [GBPUSD,M15]</Title>
        <WindowButtons $gap={14}>
          {(["min", "restore", "close"] as IconName[]).map((n) => <PlainButton key={n} aria-label={n}><Glyph name={n} size={8} /></PlainButton>)}
        </WindowButtons>
      </TitleBar>
      <MenuBar>
        <Glyph name="child" size={8} />
        <MenuItems>{menus.map((m) => <PlainButton key={m}>{m}</PlainButton>)}</MenuItems>
        <WindowButtons $gap={2}>
          {(["min", "restore", "close"] as IconName[]).map((n) => <ChildButton key={n} aria-label={`${n} chart`}><Glyph name={n} size={5} /></ChildButton>)}
        </WindowButtons>
      </MenuBar>
      <Toolbar $h={13}>
        <Group $w={42}><Grip />{drop("addChart")}{drop("profile")}</Group>
        <Group $w={73}>{tools(["market", "target", "folderStar", "terminal", "tester"], ["market", "terminal"])}</Group>
        <Group $w={107}>
          <Tool $grow={42}><Glyph name="order" />New Order</Tool>
          <Tool $grow={12} aria-label="MetaEditor"><Glyph name="book" /></Tool>
          <Tool $grow={49}><Glyph name="auto" />AutoTrading</Tool>
        </Group>
        <Group $w={45}><Grip />{tools(["bars", "candle", "line"], ["candle"])}</Group>
        <Group $w={45}>{tools(["zoomIn", "zoomOut", "tile"])}</Group>
        <Group $w={29}>{tools(["scroll", "shift"], ["scroll", "shift"])}</Group>
        <Group $w={56}>{drop("indicator")}{drop("clock")}{drop("template")}</Group>
        <ToolbarEnd>
          <PlainButton aria-label="Search"><Glyph name="find" size={8} /></PlainButton>
          <PlainButton aria-label="Chat"><Glyph name="chat" size={11} /></PlainButton>
        </ToolbarEnd>
      </Toolbar>
      <Toolbar $h={12}>
        <Group $w={33}><Grip />{tools(["cursor", "cross"], ["cursor"])}</Group>
        <Group $w={115}>
          {tools(["vline", "hline", "trend", "channel", "fibo"])}
          <Tool>A</Tool>
          {tools(["label"])}
          {drop("arrows")}
        </Group>
        <Group $w={128}><Grip />{periods.map((p) => <Period key={p} $on={p === "M15"}>{p}</Period>)}</Group>
      </Toolbar>
      <ChartWindow><Chart /></ChartWindow>
      <TabStrip>
        <TabSet>
          {chartTabs.map((t) => <ChartTab key={t} $grow={t.length === 9 ? 42 : 46} $on={t === "GBPUSD,M15"}>{t}</ChartTab>)}
        </TabSet>
        <Scrollers>
          <PlainButton aria-label="Previous charts"><Glyph name="left" size={6} /></PlainButton>
          <PlainButton aria-label="Next charts"><Glyph name="right" size={6} /></PlainButton>
        </Scrollers>
      </TabStrip>
      <Terminal>
        <TerminalRail>
          <PlainButton aria-label="Close terminal"><Glyph name="close" size={5} /></PlainButton>
          <RailTitle>Terminal</RailTitle>
        </TerminalRail>
        <TerminalBody>
          <TableArea>
            <Table>
              <colgroup>{columns.map(([c, w]) => <col key={c} width={w} />)}</colgroup>
              <thead>
                <tr>{columns.map(([c], i) => <HeadCell key={c} $right={i > 1 && i < 6}>{c}</HeadCell>)}</tr>
              </thead>
              <tbody>
                {alerts.map(([live, sym, cond, exp], i) => (
                  <Row key={i} $shade={i % 2 === 0}>
                    <Cell><SymbolName><Glyph name={live ? "bell" : "bellOff"} size={7} />{sym}</SymbolName></Cell>
                    <Cell>{cond}</Cell>
                    <Cell $right>0</Cell>
                    <Cell $right>5</Cell>
                    <Cell $right>10 sec</Cell>
                    <Cell $right>{exp}</Cell>
                    <Cell>alert</Cell>
                  </Row>
                ))}
              </tbody>
            </Table>
            <ScrollBar>
              <Glyph name="up" size={7} />
              <Thumb />
              <Glyph name="down" size={7} />
            </ScrollBar>
          </TableArea>
          <TerminalTabs>
            {termTabs.map((t) => (
              <TerminalTab key={t} $on={t === "Alerts"} $bare={t === "News"}>{t}{t === "Market" && <Unread>92</Unread>}</TerminalTab>
            ))}
          </TerminalTabs>
        </TerminalBody>
      </Terminal>
      <StatusBar>
        <Status>For Help, press F1</Status>
        <Status>Default</Status>
        <Status>2016.09.13 10:00</Status>
        <Status>O: 1.33161</Status>
        <Status>H: 1.33180</Status>
        <Status>L: 1.33075</Status>
        <Status>C: 1.33141</Status>
        <Status>V: 1599</Status>
        <Status><Icon w={12} h={6} box="0 0 32 16">{icons.traffic}</Icon>2218/2 kb</Status>
      </StatusBar>
      <Taskbar>
        <StartButton aria-label="Start"><Glyph name="win" /></StartButton>
        <SearchBox>
          <Glyph name="cortana" size={12} />
          <SearchInput aria-label="Search" placeholder="Ask me anything" />
          <Glyph name="mic" />
        </SearchBox>
        {(["taskview", "edge", "folder", "store", "media", "ie"] as IconName[]).map((n) => (
          <TaskButton key={n} aria-label={n}><Glyph name={n} size={11} /></TaskButton>
        ))}
        {(["skype", "chrome", "calc", "logo"] as IconName[]).map((n) => (
          <TaskButton key={n} aria-label={n} $open $active={n === "logo"}><Glyph name={n} size={11} /></TaskButton>
        ))}
        <Tray>
          {(["cloud", "camera", "leaf", "photo", "dropbox", "wifi", "sound"] as IconName[]).map((n) => (
            <TrayButton key={n} aria-label={n}><Glyph name={n} size={8} /></TrayButton>
          ))}
          <Clock dateTime="2016-09-13T11:09">{"11:09 AM\n9/13/2016"}</Clock>
          <NoticeButton aria-label="4 notifications">
            <Icon w={13} h={13} box="0 0 20 20">
              <path d="M1 2h13v10H8l-3 3v-3H1z" fill="#fff" />
              <path d="M3 5h9M3 8h9" stroke="#222" />
              <circle cx="13.500" cy="13" r="5.500" fill="#222" stroke="#ddd" />
              <text x="13.500" y="16" fontSize="8" fill="#fff" textAnchor="middle" fontFamily="Liberation Sans">4</text>
            </Icon>
          </NoticeButton>
        </Tray>
      </Taskbar>
    </Desktop>
  );
}
